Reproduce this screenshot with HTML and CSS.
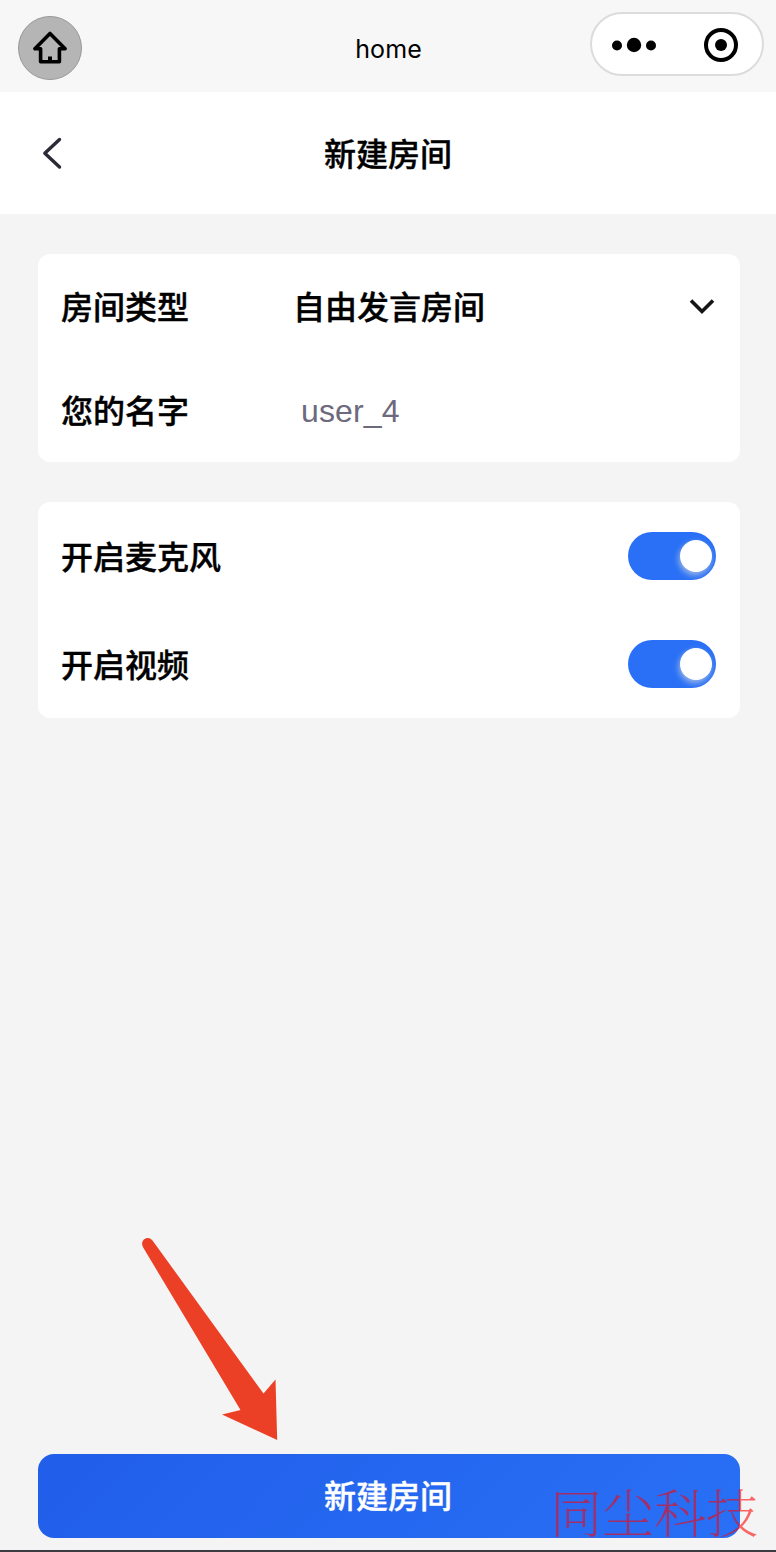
FILE: index.html
```html
<!DOCTYPE html>
<html lang="zh-CN">
<head>
<meta charset="utf-8">
<title>新建房间</title>
<link rel="stylesheet" href="styles.css">
</head>
<body>
<div class="app">
  <header class="titlebar">
    <button class="home-btn" aria-label="home">
      <svg width="36" height="36" viewBox="0 0 36 36"><path d="M18 3.5 L2.9 18.8 H8.6 V31.8 H27.4 V18.8 H33.1 Z" fill="none" stroke="#000" stroke-width="3.6" stroke-linejoin="round"/><path d="M18 26.5V32" stroke="#000" stroke-width="4"/></svg>
    </button>
    <span class="app-name">home</span>
    <div class="capsule">
      <svg width="170" height="60" viewBox="0 0 170 60"><circle cx="25" cy="31.5" r="5"/><circle cx="42" cy="31" r="7.2"/><circle cx="59" cy="31.5" r="5"/><circle cx="129" cy="31" r="15" fill="none" stroke="#000" stroke-width="4"/><circle cx="129" cy="31" r="6"/></svg>
    </div>
  </header>
  <nav class="navbar">
    <button class="back" aria-label="返回">
      <svg width="24" height="34" viewBox="0 0 24 34"><path d="M19.5 3.5 L4.8 17.2 L19.5 31" fill="none" stroke="#2b2a36" stroke-width="3.4" stroke-linecap="round" stroke-linejoin="round"/></svg>
    </button>
    <h1 class="page-title">新建房间</h1>
  </nav>
  <main class="content">
    <section class="card">
      <div class="row">
        <span class="label">房间类型</span>
        <span class="value">自由发言房间</span>
        <svg class="chevron" width="28" height="20" viewBox="0 0 28 20"><path d="M3 4.5 L14 15.5 L25 4.5" fill="none" stroke="#151515" stroke-width="3.6"/></svg>
      </div>
      <div class="row">
        <span class="label">您的名字</span>
        <span class="value placeholder">user_4</span>
      </div>
    </section>
    <section class="card">
      <div class="row tall"><span class="label">开启麦克风</span><span class="switch"><span class="knob"></span></span></div>
      <div class="row tall"><span class="label">开启视频</span><span class="switch"><span class="knob"></span></span></div>
    </section>
  </main>
  <footer class="footer"><button class="submit">新建房间</button></footer>
  <svg class="arrow" width="140" height="206" viewBox="0 0 140 206"><path d="M3.2 11.5 C-1 4 8 -1.5 12.5 4.5 L123.5 157.5 L135.5 143.5 L137.2 204 L82 178.5 L100.5 174 Z" fill="#eb4025"/></svg>
  <span class="watermark">同尘科技</span>
</div>
</body>
</html>
```
FILE: styles.css
```css
* { box-sizing: border-box; }
body { margin: 0; font-family: "Liberation Sans", "Noto Sans CJK SC", sans-serif; color: #000; }
button { border: 0; padding: 0; background: none; font: inherit; }
svg { display: block; }
.app { position: relative; display: flex; flex-direction: column; height: 1552px; background: #f4f4f4; border-bottom: 2px solid #3b3b40; overflow: hidden; }
.titlebar { display: grid; grid-template-columns: 200px 1fr 200px; align-items: center; height: 92px; padding: 0 12px 4px 18px; background: #f7f7f7; }
.home-btn { display: grid; place-items: center; width: 64px; height: 64px; margin-top: 8px; border: 1px solid #989898; border-radius: 50%; background: #b5b5b5; }
.app-name { font-family: Inter, sans-serif; font-size: 25px; text-align: center; padding: 10px 0 0 0; letter-spacing: .1px; margin-left: -5px; }
.capsule { justify-self: end; width: 174px; height: 64px; border: 2px solid #dcdcdc; border-radius: 32px; background: #fff; }
.navbar { display: grid; grid-template-columns: 60px 1fr 60px; align-items: center; height: 122px; padding: 0 40px; background: #fff; }
.page-title, .label, .value, .submit { font: 500 32px/48px "Noto Sans CJK SC", sans-serif; -webkit-text-stroke: .4px currentColor; }
.page-title { margin: 0; padding-bottom: 2px; text-align: center; }
.content { display: flex; flex-direction: column; gap: 40px; padding: 40px 36px 0 38px; }
.card { border-radius: 12px; background: #fff; }
.row { display: flex; align-items: center; height: 104px; padding: 0 24px 0 23px; }
.tall { height: 108px; }
.label, .value { padding-bottom: 3px; }
.label { width: 232px; }
.placeholder { padding: 1px 0 0 8px; color: #6c6a7c; font: 400 32px/48px "Liberation Sans", sans-serif; letter-spacing: .15px; -webkit-text-stroke: 0; }
.chevron { margin-left: auto; }
.switch { display: flex; align-items: center; justify-content: flex-end; width: 88px; height: 48px; margin-left: auto; padding: 4px; border-radius: 24px; background: #2970f6; overflow: hidden; }
.knob { width: 32px; height: 32px; border-radius: 50%; background: #fff; box-shadow: -1px 3px 6px rgba(225, 225, 225, .65); }
.footer { margin-top: auto; padding: 0 36px 12px 38px; }
.submit { display: block; width: 100%; height: 84px; padding: 0 2px 4px 0; border-radius: 16px; background: linear-gradient(135deg, #215ee9, #2970f6); color: #fff; }
.arrow { position: absolute; left: 140px; top: 1236px; }
.watermark { position: absolute; left: 550px; top: 1475px; color: rgba(255, 0, 0, .58); font: 200 52px/72px "Noto Serif CJK SC", "Noto Sans CJK SC", serif; white-space: nowrap; }
```
